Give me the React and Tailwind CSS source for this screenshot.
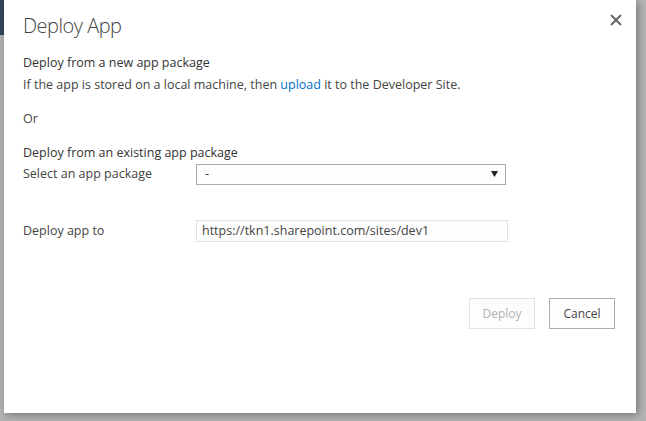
import React from 'react';

const font = { fontFamily: '"Open Sans", "Noto Sans", sans-serif' };

const App = () => {
  return (
    <div
      className="relative w-[646px] h-[421px] overflow-hidden bg-[#b4b4b4]"
      style={font}
    >
      {/* page behind the overlay */}
      <div className="absolute left-0 top-0 w-[4px] h-[35px] bg-[#34475c]" />

      <div className="absolute left-[4px] top-0 w-[632px] h-[413px] bg-white shadow-[2px_2px_8px_rgba(0,0,0,0.35)] text-[#444] text-[12.5px]">
        <div className="flex items-start justify-between pl-[19px] pr-[14px] pt-[11px]">
          <h1 className="text-[20px] font-light text-[#444] leading-[30px] tracking-[-0.5px]">Deploy App</h1>
          <button className="mt-[3px] text-[#666]" aria-label="Close">
            <svg width="12" height="12" viewBox="0 0 12 12">
              <path d="M1 1L11 11M11 1L1 11" stroke="currentColor" strokeWidth="2" />
            </svg>
          </button>
        </div>

        <div className="pl-[19px] pt-[11px]">
          <p className="leading-[22px] text-[#333]">Deploy from a new app package</p>
          <p className="leading-[22px]">
            If the app is stored on a local machine, then{' '}
            <a className="text-[#0072c6]">upload</a> it to the Developer Site.
          </p>
          <p className="leading-[22px] mt-[12px]">Or</p>

          <p className="leading-[22px] mt-[12px] text-[#333]">Deploy from an existing app package</p>
          <div className="flex items-center mt-[-1px]">
            <span className="w-[173px] leading-[22px]">Select an app package</span>
            <div className="w-[310px] h-[21px] border border-[#ababab] bg-[#fdfdfd] flex items-center justify-between pl-[8px] pr-[7px]">
              <span className="text-[#333]">-</span>
              <svg width="7" height="6" viewBox="0 0 7 6">
                <path d="M0 0H7L3.5 6Z" fill="#222" />
              </svg>
            </div>
          </div>

          <div className="flex items-center mt-[35px]">
            <span className="w-[173px] leading-[22px]">Deploy app to</span>
            <div className="w-[312px] h-[22px] border border-[#e1e1e1] bg-[#fdfdfd] flex items-center pl-[5px] text-[#444]">
              https://tkn1.sharepoint.com/sites/dev1
            </div>
          </div>
        </div>

        <div className="flex justify-end gap-[14px] pr-[21px] mt-[56px]">
          <button className="w-[66px] h-[31px] border border-[#e1e1e1] bg-[#fdfdfd] text-[#b1b1b1] text-[12px]">
            Deploy
          </button>
          <button className="w-[66px] h-[31px] border border-[#ababab] bg-[#fdfdfd] text-[#444] text-[12px]">
            Cancel
          </button>
        </div>
      </div>
    </div>
  );
};

export default App;
